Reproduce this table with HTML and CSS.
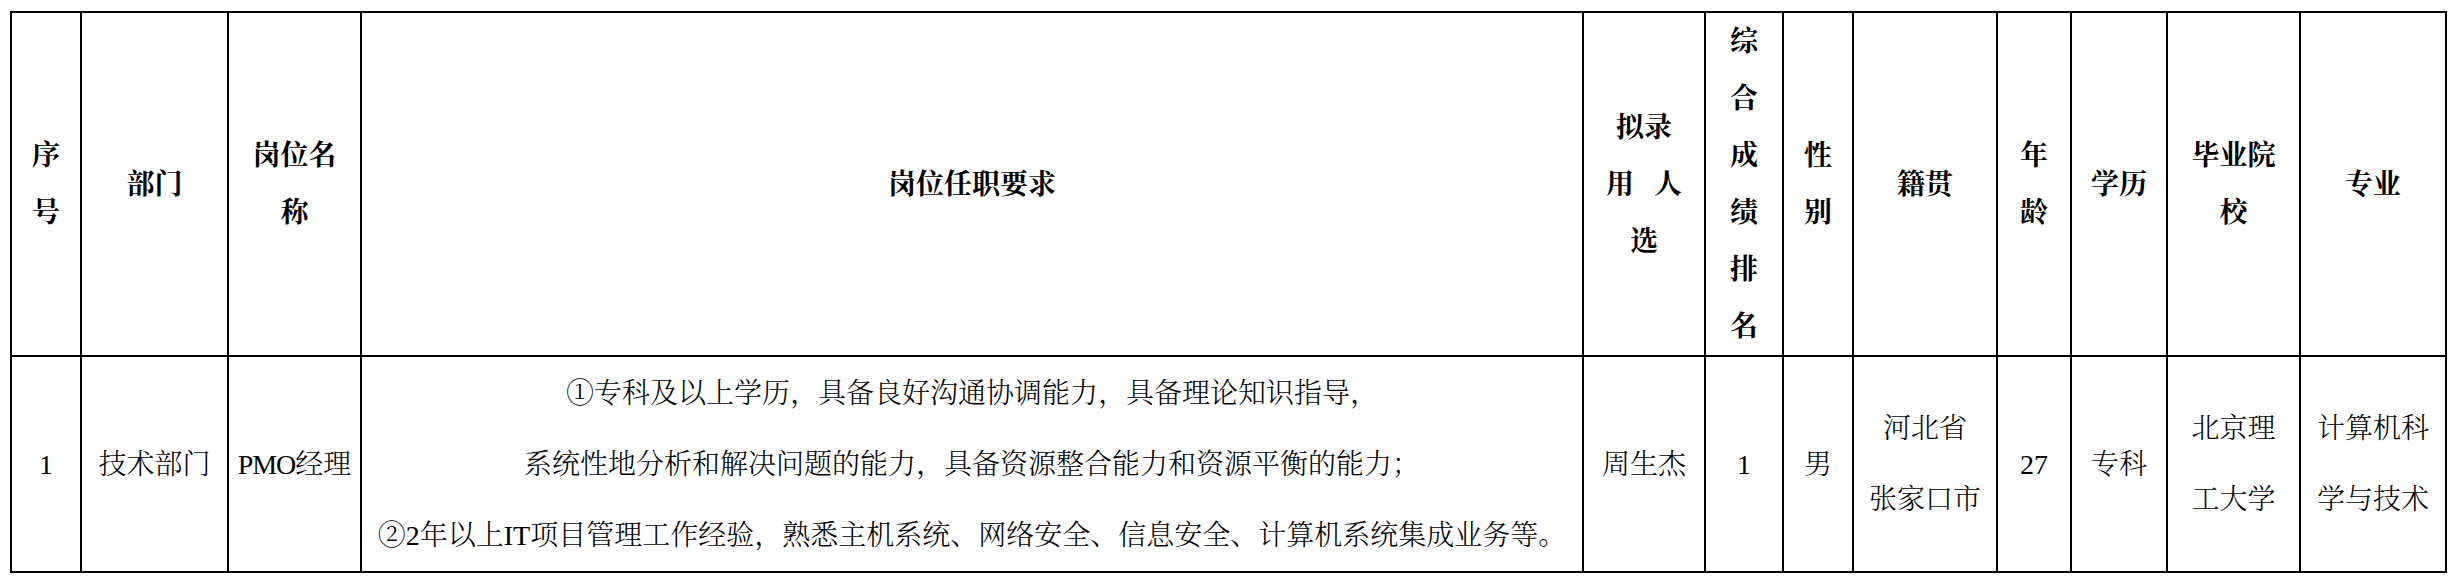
FILE: index.html
```html
<!DOCTYPE html>
<html lang="zh-CN">
<head>
<meta charset="utf-8">
<title>拟录用人选</title>
<link rel="stylesheet" href="styles.css">
</head>
<body>
<div class="page">
<table class="grid">
  <colgroup>
    <col class="c1"><col class="c2"><col class="c3"><col class="c4">
    <col class="c5"><col class="c6"><col class="c7"><col class="c8">
    <col class="c9"><col class="c10"><col class="c11"><col class="c12">
  </colgroup>
  <thead>
    <tr class="head">
      <th>序<br>号</th>
      <th>部门</th>
      <th>岗位名<br>称</th>
      <th>岗位任职要求</th>
      <th>拟录<br>用<span class="gap"></span>人<br>选</th>
      <th>综<br>合<br>成<br>绩<br>排<br>名</th>
      <th>性<br>别</th>
      <th>籍贯</th>
      <th>年<br>龄</th>
      <th>学历</th>
      <th>毕业院<br>校</th>
      <th>专业</th>
    </tr>
  </thead>
  <tbody>
    <tr class="body">
      <td>1</td>
      <td>技术部门</td>
      <td><span class="latin">PMO</span>经理</td>
      <td class="req">①专科及以上学历，具备良好沟通协调能力，具备理论知识指导，<br>系统性地分析和解决问题的能力，具备资源整合能力和资源平衡的能力；<br>②2年以上IT项目管理工作经验，熟悉主机系统、网络安全、信息安全、计算机系统集成业务等。</td>
      <td>周生杰</td>
      <td>1</td>
      <td>男</td>
      <td>河北省<br>张家口市</td>
      <td>27</td>
      <td>专科</td>
      <td>北京理<br>工大学</td>
      <td>计算机科<br>学与技术</td>
    </tr>
  </tbody>
</table>
</div>
</body>
</html>
```

FILE: styles.css
```css
html, body {
  margin: 0;
  padding: 0;
  background: #ffffff;
}

.page {
  padding: 11px 0 0 10px;
}

.grid {
  border-collapse: collapse;
  table-layout: fixed;
  width: 2435px;
  font-family: "Liberation Serif", "Noto Serif CJK SC", "Noto Sans CJK SC", serif;
  font-size: 28px;
  color: #000;
}

.c1 { width: 70px; }
.c2 { width: 147px; }
.c3 { width: 133px; }
.c4 { width: 1222px; }
.c5 { width: 122px; }
.c6 { width: 78px; }
.c7 { width: 70px; }
.c8 { width: 144px; }
.c9 { width: 74px; }
.c10 { width: 96px; }
.c11 { width: 133px; }
.c12 { width: 146px; }

.grid th,
.grid td {
  border: 2px solid #000;
  padding: 0;
  text-align: center;
  vertical-align: middle;
  overflow: hidden;
}

.head th {
  height: 342px;
  line-height: 57px;
  font-weight: 700;
}

.body td {
  height: 214px;
  line-height: 71px;
  font-weight: 300;
}

.req {
  white-space: nowrap;
}

.latin {
  letter-spacing: -1px;
}

.gap {
  display: inline-block;
  width: 20px;
}
```
